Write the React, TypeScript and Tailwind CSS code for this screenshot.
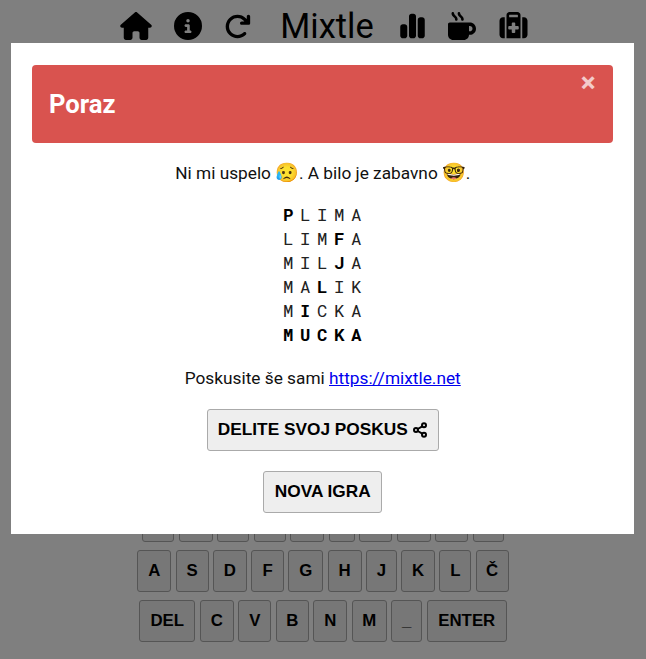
import { FaHouse, FaCircleInfo, FaArrowRotateRight, FaMugHot, FaSuitcaseMedical, FaChartSimple } from "react-icons/fa6";
import { Share2 } from "lucide-react";

const rows: { gap: string; keys: [string, string][] }[] = [
  { gap: "gap-[4.5px]", keys: [["E","w-[32px]"],["R","w-[34px]"],["T","w-[32px]"],["Z","w-[32px]"],["U","w-[34px]"],["I","w-[26px]"],["O","w-[33px]"],["P","w-[34px]"],["Š","w-[33px]"],["Ž","w-[31px]"]] },
  { gap: "gap-[4.25px]", keys: [["A","w-[34px]"],["S","w-[33px]"],["D","w-[34px]"],["F","w-[33px]"],["G","w-[35px]"],["H","w-[34px]"],["J","w-[31px]"],["K","w-[34px]"],["L","w-[32px]"],["Č","w-[33px]"]] },
  { gap: "gap-[4.5px]", keys: [["DEL","w-[56px]"],["C","w-[34px]"],["V","w-[33px]"],["B","w-[33px]"],["N","w-[34px]"],["M","w-[35px]"],["_","w-[31px]"],["ENTER","w-[80px]"]] },
];

const words = [
  ["PLIMA", 0], ["LIMFA", 3], ["MILJA", 3], ["MALIK", 2], ["MICKA", 1], ["MUCKA", -1],
] as const;

export default function App() {
  return (
    <div className="relative h-[659px] w-[646px] overflow-hidden bg-white font-['Roboto',sans-serif] text-black">
      <header className="flex h-[52px] items-center justify-center gap-[22px] pl-[2px]">
        <FaHouse className="h-[28px] w-[32px]" />
        <FaCircleInfo className="h-[28px] w-[28px]" />
        <FaArrowRotateRight className="h-[27px] w-[27px]" />
        <h1 className="ml-[7px] mr-[4px] text-[34.4px] leading-none">Mixtle</h1>
        <FaChartSimple className="h-[28px] w-[25px]" />
        <FaMugHot className="h-[28px] w-[30px]" />
        <FaSuitcaseMedical className="h-[28px] w-[29px]" />
      </header>
      <main className="mt-[448px] flex flex-col items-center gap-[8px] font-['Liberation_Sans',sans-serif] text-[16.8px] font-bold">
        {rows.map((row, i) => (
          <div key={i} className={`flex ${row.gap}`}>
            {row.keys.map(([k, w]) => (
              <div key={k} className={`flex h-[42px] items-center justify-center rounded-[3px] border border-[#aaa] bg-[#eee] ${w}`}>{k}</div>
            ))}
          </div>
        ))}
      </main>
      <div className="absolute inset-0 bg-black/50" />
      <div className="absolute left-[10.5px] top-[43px] flex h-[490.5px] w-[623.5px] flex-col items-center bg-white px-[21.5px] pt-[22px] text-[17.28px]">
        <div className="relative flex h-[78px] w-full items-center rounded-[4px] bg-[#d9534f] px-[17px] pt-[1px] text-white">
          <h2 className="text-[25.6px] font-bold">Poraz</h2>
          <span className="absolute right-[17px] top-[4px] text-[28px] font-bold leading-[28px] opacity-70">×</span>
        </div>
        <p className="ml-[1px] mt-[18px] h-[24px] leading-[24px] text-[#111]">
          Ni mi uspelo <span className="font-['Noto_Color_Emoji'] text-[19px] leading-none">😥</span>. A bilo je zabavno <span className="font-['Noto_Color_Emoji'] text-[19px] leading-none">🤓</span>.
        </p>
        <div className="mt-[18px] font-['Roboto_Mono','DejaVu_Sans_Mono',monospace] text-[17.28px] leading-[24px] text-[#222]">
          {words.map(([w, b]) => (
            <div key={w} className="flex h-[24px]">
              {w.split("").map((c, i) => (
                <span key={i} className={`w-[17px] text-center ${b === -1 || b === i ? "font-bold text-black" : "font-normal"}`}>{c}</span>
              ))}
            </div>
          ))}
        </div>
        <p className="ml-[1px] mt-[19px] h-[24px] leading-[24px] text-[#111]">
          Poskusite še sami <a className="text-[#0000ee] underline" href="#">https://mixtle.net</a>
        </p>
        <button className="ml-[1px] mt-[19px] flex h-[42px] w-[232px] items-center justify-center gap-[4px] rounded-[3px] border border-[#aaa] bg-[#eee] font-['Liberation_Sans',sans-serif] text-[17.28px] font-bold">
          DELITE SVOJ POSKUS <Share2 className="h-[16px] w-[16px]" strokeWidth={3} />
        </button>
        <button className="ml-[1px] mt-[20px] flex h-[42px] w-[119px] items-center justify-center rounded-[3px] border border-[#aaa] bg-[#eee] font-['Liberation_Sans',sans-serif] text-[17.28px] font-bold">
          NOVA IGRA
        </button>
      </div>
    </div>
  );
}
